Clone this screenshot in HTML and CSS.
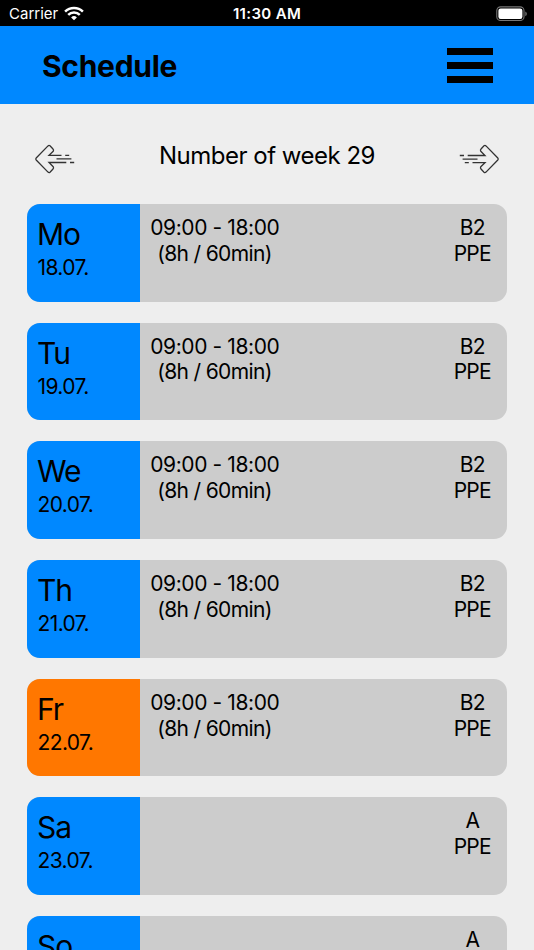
FILE: index.html
```html
<!DOCTYPE html>
<html lang="en">
<head>
    <meta charset="UTF-8">
    <meta name="viewport" content="width=device-width, initial-scale=1.0">
    <title>Schedule</title>
    <link rel="stylesheet" href="styles.css">
</head>
<body>
    <div class="status-bar">
        <div class="status-left">
            <span class="carrier">Carrier</span>
            <svg class="wifi" width="20" height="15" viewBox="0 0 20 15" fill="none" stroke="#fff" stroke-width="2.5">
                <path d="M1.1 5.6a12.6 12.6 0 0 1 17.8 0"/>
                <path d="M4.2 8.9a8.2 8.2 0 0 1 11.6 0"/>
                <path d="M10 14.3l-2.9-2.9a4.1 4.1 0 0 1 5.8 0z" fill="#fff" stroke="none"/>
            </svg>
        </div>
        <span class="clock">11:30 AM</span>
        <svg class="battery" width="32" height="16" viewBox="0 0 32 16">
            <rect x="0.8" y="0.9" width="27.2" height="13.6" rx="3.8" fill="none" stroke="#777" stroke-width="1.1"/>
            <rect x="2.4" y="2.5" width="24" height="10.4" rx="2.2" fill="#fff"/>
            <path d="M29.3 5.4c2 .8 2 3.9 0 4.7z" fill="#777"/>
        </svg>
    </div>

    <header class="header">
        <h1>Schedule</h1>
        <div class="menu">
            <span></span>
            <span></span>
            <span></span>
        </div>
    </header>

    <main class="content">
        <div class="week">
            <svg class="arrow" width="42" height="32" viewBox="0 0 42 32">
                <path d="M28.5 12.3H16l4.2-4Q21 7 20 6L17 2.8Q16 2 15 2.9L3.2 15Q2.3 16 3.2 17L15 29.1Q16 30 17 29.2L20 26Q21 25 20.2 23.7L16 19.5H33.3M32.2 12.3h4M23.5 15.9H38.4M37 19.5h4.2"/>
            </svg>
            <h2>Number of week 29</h2>
            <svg class="arrow right" width="42" height="32" viewBox="0 0 42 32">
                <path d="M28.5 12.3H16l4.2-4Q21 7 20 6L17 2.8Q16 2 15 2.9L3.2 15Q2.3 16 3.2 17L15 29.1Q16 30 17 29.2L20 26Q21 25 20.2 23.7L16 19.5H33.3M32.2 12.3h4M23.5 15.9H38.4M37 19.5h4.2"/>
            </svg>
        </div>

        <div class="days">
            <div class="day-card">
                <div class="day">
                    <p class="name">Mo</p>
                    <p class="date">18.07.</p>
                </div>
                <div class="hours">
                    <p>09:00 - 18:00</p>
                    <p class="total">(8h / 60min)</p>
                </div>
                <div class="place">
                    <p>B2</p>
                    <p>PPE</p>
                </div>
            </div>

            <div class="day-card">
                <div class="day">
                    <p class="name">Tu</p>
                    <p class="date">19.07.</p>
                </div>
                <div class="hours">
                    <p>09:00 - 18:00</p>
                    <p class="total">(8h / 60min)</p>
                </div>
                <div class="place">
                    <p>B2</p>
                    <p>PPE</p>
                </div>
            </div>

            <div class="day-card">
                <div class="day">
                    <p class="name">We</p>
                    <p class="date">20.07.</p>
                </div>
                <div class="hours">
                    <p>09:00 - 18:00</p>
                    <p class="total">(8h / 60min)</p>
                </div>
                <div class="place">
                    <p>B2</p>
                    <p>PPE</p>
                </div>
            </div>

            <div class="day-card">
                <div class="day">
                    <p class="name">Th</p>
                    <p class="date">21.07.</p>
                </div>
                <div class="hours">
                    <p>09:00 - 18:00</p>
                    <p class="total">(8h / 60min)</p>
                </div>
                <div class="place">
                    <p>B2</p>
                    <p>PPE</p>
                </div>
            </div>

            <div class="day-card today">
                <div class="day">
                    <p class="name">Fr</p>
                    <p class="date">22.07.</p>
                </div>
                <div class="hours">
                    <p>09:00 - 18:00</p>
                    <p class="total">(8h / 60min)</p>
                </div>
                <div class="place">
                    <p>B2</p>
                    <p>PPE</p>
                </div>
            </div>

            <div class="day-card">
                <div class="day">
                    <p class="name">Sa</p>
                    <p class="date">23.07.</p>
                </div>
                <div class="hours"></div>
                <div class="place">
                    <p>A</p>
                    <p>PPE</p>
                </div>
            </div>

            <div class="day-card">
                <div class="day">
                    <p class="name">So</p>
                    <p class="date">24.07.</p>
                </div>
                <div class="hours"></div>
                <div class="place">
                    <p>A</p>
                    <p>PPE</p>
                </div>
            </div>
        </div>
    </main>
</body>
</html>
```
FILE: styles.css
```css
* {
    box-sizing: border-box;
    margin: 0;
    padding: 0;
}

body {
    height: 100vh;
    overflow: hidden;
    display: flex;
    flex-direction: column;
    font-family: Inter, "Liberation Sans", sans-serif;
    background: #eeeeee;
    color: #000;
}

/* Status bar */
.status-bar {
    flex: none;
    height: 26px;
    padding: 1px 6px 0;
    display: grid;
    grid-template-columns: 1fr auto 1fr;
    align-items: center;
    background: #000;
    color: #fff;
    font-size: 15px;
}
.status-left {
    padding-left: 3px;
    display: flex;
    align-items: center;
    gap: 6px;
}
.clock {
    font-weight: 600;
    letter-spacing: 0.35px;
}
.battery {
    justify-self: end;
}

/* Header */
.header {
    flex: none;
    height: 78px;
    padding: 0 41px;
    display: flex;
    align-items: center;
    justify-content: space-between;
    background: #0088ff;
}
.header h1 {
    padding: 1px 0 0 1px;
    font-size: 30px;
    font-weight: 700;
    letter-spacing: -0.3px;
}
.menu {
    width: 46px;
    display: flex;
    flex-direction: column;
    gap: 7px;
}
.menu span {
    height: 7px;
    background: #000;
}

.content {
    flex: none;
    padding: 0 27px;
}

/* Week switcher */
.week {
    height: 100px;
    padding: 2px 6px 0;
    display: flex;
    align-items: center;
    justify-content: space-between;
}
.week h2 {
    font-size: 24px;
    font-weight: 400;
    letter-spacing: -0.5px;
}
.arrow {
    margin-top: 8px;
    fill: none;
    stroke: #333;
    stroke-width: 1.3;
}
.right {
    transform: rotate(180deg);
}

/* Days */
.days {
    display: flex;
    flex-direction: column;
    gap: 21px;
}
.day-card {
    height: 97.7px;
    display: flex;
    border-radius: 13px;
    overflow: hidden;
    background: #cccccc;
    font-size: 21px;
    line-height: 25.8px;
    letter-spacing: -0.4px;
}
.day {
    width: 112.7px;
    padding: 12px 10px;
    background: #0088ff;
}
.today .day {
    background: #ff7700;
}
.name {
    font-size: 30px;
    line-height: 37px;
    letter-spacing: -1px;
}
.date {
    margin-top: 2px;
    padding-left: 0.5px;
    letter-spacing: -0.6px;
}
.hours {
    flex: 1;
    padding: 11px 10.5px;
}
.total {
    padding-left: 7px;
    letter-spacing: -0.65px;
}
.place {
    padding: 11px 16px;
    text-align: center;
    letter-spacing: -0.7px;
}
```
